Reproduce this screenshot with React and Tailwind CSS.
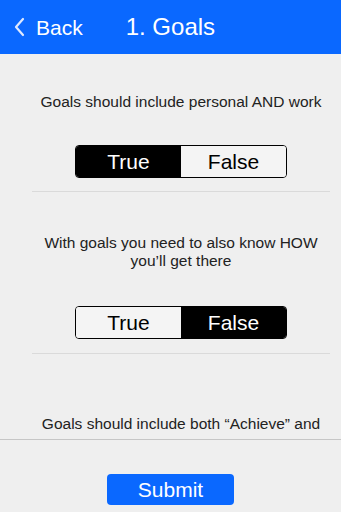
import { useState } from 'react';

const questions = [
  { id: 1, text: 'Goals should include personal AND work', answer: true, top: 'mt-[39px] leading-[18px]', seg: 'mt-[34px]', div: 'mt-[13px]' },
  { id: 2, text: 'With goals you need to also know HOW you’ll get there', answer: false, top: 'mt-[42px] leading-[18px]', seg: 'mt-[36px]', div: 'mt-[14px]' },
  { id: 3, text: 'Goals should include both “Achieve” and “Avoid” goals', answer: null, top: 'mt-[59px] leading-[22px]', seg: 'mt-[34px]', div: 'mt-[13px]' },
];

function Segment({ value, onChange }) {
  return (
    <div className="mx-auto flex h-[33px] w-[212px] overflow-hidden rounded-[4px] border border-black">
      <button
        className={`flex-1 text-[21px] leading-none ${value === true ? 'bg-black text-white' : 'bg-[#f4f4f4] text-black'}`}
        onClick={() => onChange(true)}
      >
        True
      </button>
      <button
        className={`flex-1 text-[21px] leading-none ${value === false ? 'bg-black text-white' : 'bg-[#f4f4f4] text-black'}`}
        onClick={() => onChange(false)}
      >
        False
      </button>
    </div>
  );
}

export default function App() {
  const [answers, setAnswers] = useState(Object.fromEntries(questions.map((q) => [q.id, q.answer])));

  return (
    <div className="flex h-[512px] w-[341px] flex-col bg-[#efefef] font-['Liberation_Sans',Arial,sans-serif]">
      <header className="flex h-[54px] shrink-0 items-center bg-[#0a68ff] text-white">
        <button className="ml-[13px] flex items-center">
          <svg width="13" height="20" viewBox="0 0 13 20" fill="none" stroke="#dfe9ff" strokeWidth="2.2" strokeLinecap="round" strokeLinejoin="round">
            <path d="M10 2 L3 10 L10 18" />
          </svg>
          <span className="ml-[10px] text-[21px] leading-none">Back</span>
        </button>
        <h1 className="ml-[43px] text-[24px] leading-none">1. Goals</h1>
      </header>

      <div className="h-[386px] shrink-0 overflow-hidden border-b border-[#c6c6c6]">
        <div className="ml-[32px] w-[298px]">
          {questions.map((q) => (
            <div key={q.id}>
              <p className={`${q.top} px-[4px] text-center text-[15.5px] text-[#222]`}>{q.text}</p>
              <div className={q.seg}>
                <Segment value={answers[q.id]} onChange={(v) => setAnswers({ ...answers, [q.id]: v })} />
              </div>
              <div className={`${q.div} h-px bg-[#dadada]`} />
            </div>
          ))}
        </div>
      </div>

      <div className="flex flex-1 justify-center pt-[34px]">
        <button className="h-[31px] w-[127px] rounded-[4px] bg-[#0a68ff] text-[21px] leading-[31px] text-white">Submit</button>
      </div>
    </div>
  );
}
